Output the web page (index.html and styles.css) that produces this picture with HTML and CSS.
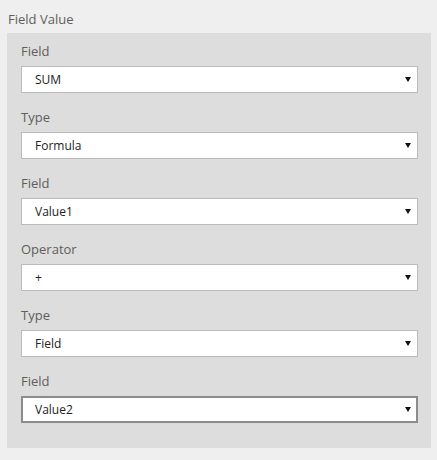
FILE: index.html
```html
<!DOCTYPE html>
<html lang="en">
<head>
    <meta charset="UTF-8">
    <title>Field Value</title>
    <link rel="stylesheet" href="styles.css">
</head>
<body>
    <div class="title">Field Value</div>
    <div class="panel">
        <div class="group">
            <label>Field</label>
            <div class="select"><select><option>SUM</option></select></div>
        </div>
        <div class="group">
            <label>Type</label>
            <div class="select"><select><option>Formula</option></select></div>
        </div>
        <div class="group">
            <label>Field</label>
            <div class="select"><select><option>Value1</option></select></div>
        </div>
        <div class="group">
            <label>Operator</label>
            <div class="select"><select><option>+</option></select></div>
        </div>
        <div class="group">
            <label>Type</label>
            <div class="select"><select><option>Field</option></select></div>
        </div>
        <div class="group">
            <label>Field</label>
            <div class="select focused"><select><option>Value2</option></select></div>
        </div>
    </div>
</body>
</html>
```

FILE: styles.css
```css
body {
    margin: 0;
    background: #efefef;
    font-family: "Open Sans", "Noto Sans", sans-serif;
    color: #605e5c;
}
.title {
    font-size: 13px;
    line-height: 20px;
    padding: 9px 0 0 8px;
    margin-bottom: 4px;
}
.panel {
    background: #dddddd;
    margin-left: 7px;
    width: 424px;
    box-sizing: border-box;
    padding: 8px 13px 11px 14px;
}
.group {
    margin-bottom: 14px;
}
.group label {
    display: block;
    font-size: 13px;
    line-height: 20px;
    margin-bottom: 5px;
}
.select {
    position: relative;
}
.select select {
    appearance: none;
    -webkit-appearance: none;
    display: block;
    width: 100%;
    height: 27px;
    box-sizing: border-box;
    border: 1px solid #bbbbbb;
    background: white;
    border-radius: 0;
    font-family: "Open Sans", "Noto Sans", sans-serif;
    font-size: 12px;
    color: #222222;
    padding: 0 0 0 13px;
    outline: none;
}
.select.focused select {
    border: 2px solid #8c8c8c;
    padding-left: 12px;
}
/* dropdown arrow */
.select::after {
    content: "";
    position: absolute;
    right: 7px;
    top: 11px;
    width: 0;
    height: 0;
    border-left: 3px solid transparent;
    border-right: 3px solid transparent;
    border-top: 5px solid #111111;
    pointer-events: none;
}
```
